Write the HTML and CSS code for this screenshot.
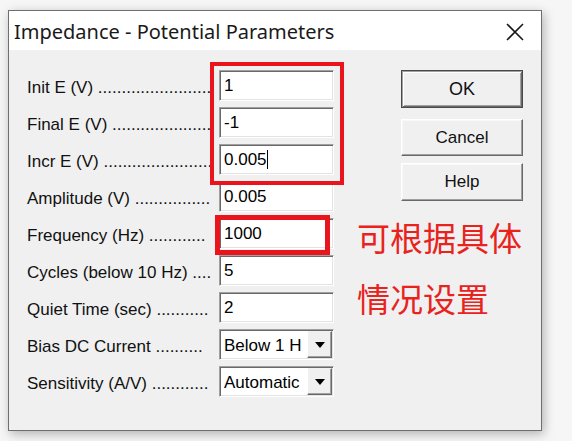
FILE: index.html
```html
<!DOCTYPE html>
<html lang="zh">
<head>
<meta charset="utf-8">
<title>Impedance - Potential Parameters</title>
<link rel="stylesheet" href="styles.css">
</head>
<body>
<div class="dialog">
  <div class="titlebar">
    <span class="title">Impedance - Potential Parameters</span>
    <svg class="close" width="18" height="18" viewBox="0 0 18 18"><path d="M1 1 L17 17 M17 1 L1 17" stroke="#1a1a1a" stroke-width="1.6" fill="none"/></svg>
  </div>
  <div class="body">
    <div class="form">
      <div class="row"><div class="label">Init E (V) ........................</div><div class="field">1</div></div>
      <div class="row"><div class="label">Final E (V) .....................</div><div class="field">-1</div></div>
      <div class="row"><div class="label">Incr E (V) .......................</div><div class="field">0.005<span class="caret"></span></div></div>
      <div class="row"><div class="label">Amplitude (V) ................</div><div class="field">0.005</div></div>
      <div class="row"><div class="label">Frequency (Hz) ............</div><div class="field">1000</div></div>
      <div class="row"><div class="label">Cycles (below 10 Hz) ....</div><div class="field">5</div></div>
      <div class="row"><div class="label">Quiet Time (sec) ...........</div><div class="field">2</div></div>
      <div class="row"><div class="label">Bias DC Current ..........</div><div class="combo"><span class="cv">Below 1 H</span><span class="drop"><span class="tri"></span></span></div></div>
      <div class="row"><div class="label">Sensitivity (A/V) ............</div><div class="combo"><span class="cv">Automatic</span><span class="drop"><span class="tri"></span></span></div></div>
    </div>
    <div class="buttons">
      <div class="btn default">OK</div>
      <div class="btn cancel">Cancel</div>
      <div class="btn help">Help</div>
    </div>
    <div class="mark mark1"></div>
    <div class="mark mark2"></div>
    <div class="note">可根据具体<br>情况设置</div>
  </div>
</div>
</body>
</html>
```
FILE: styles.css
```css
html, body {
  margin: 0;
  padding: 0;
}
body {
  width: 572px;
  height: 441px;
  background: #f6f6f6;
  overflow: hidden;
  font-family: "Liberation Sans", Arial, sans-serif;
}
.dialog {
  box-sizing: border-box;
  margin: 10px 0 0 8px;
  width: 534px;
  height: 421px;
  border: 1px solid #6f6f6f;
  box-shadow: 2px 3px 10px rgba(0,0,0,0.28);
  display: flex;
  flex-direction: column;
}
.titlebar {
  height: 39px;
  background: #ffffff;
  display: flex;
  align-items: center;
  justify-content: space-between;
  padding: 0 17px 0 5px;
}
.title {
  font-family: "Noto Sans", "Open Sans", sans-serif;
  font-size: 20px;
  color: #1a1a1a;
  margin-top: 1px;
}
.close {
  display: block;
  margin-top: 3px;
}
.body {
  position: relative;
  flex: 1;
  background: #f0f0f0;
  display: flex;
  align-items: flex-start;
  padding: 20px 0 0 18px;
}
.form {
  display: flex;
  flex-direction: column;
  gap: 6px;
}
.row {
  display: flex;
  align-items: center;
  height: 31px;
}
.label {
  width: 186px;
  font-size: 17px;
  color: #111;
  white-space: nowrap;
  margin-top: 4px;
  margin-right: 6px;
}
.field, .combo {
  box-sizing: border-box;
  width: 115px;
  height: 31px;
  background: #ffffff;
  border: 1px solid;
  border-color: #a0a0a0 #ffffff #ffffff #a0a0a0;
  box-shadow: inset 1px 1px 0 #696969, inset -1px -1px 0 #e3e3e3;
  font-size: 17px;
  color: #000;
  padding: 5px 0 0 4px;
  white-space: nowrap;
}
.caret {
  display: inline-block;
  width: 1px;
  height: 19px;
  background: #000;
  vertical-align: -4px;
}
.combo {
  display: flex;
  padding: 0 0 0 4px;
  align-items: center;
  justify-content: space-between;
}
.cv {
  padding-top: 3px;
}
.drop {
  box-sizing: border-box;
  flex: none;
  width: 25px;
  height: 27px;
  margin: 0 1px 0 0;
  background: #f0f0f0;
  border: 1px solid;
  border-color: #f0f0f0 #696969 #696969 #ffffff;
  box-shadow: inset -1px -1px 0 #a0a0a0;
  display: flex;
  align-items: center;
  justify-content: center;
}
.tri {
  width: 0;
  height: 0;
  border-left: 5px solid transparent;
  border-right: 5px solid transparent;
  border-top: 6px solid #000;
}
.buttons {
  display: flex;
  flex-direction: column;
  margin-left: 67px;
}
.btn {
  box-sizing: border-box;
  width: 122px;
  height: 37px;
  display: flex;
  align-items: center;
  justify-content: center;
  font-size: 17px;
  color: #111;
  background: #f0f0f0;
  border: 1px solid;
  border-color: #ffffff #696969 #696969 #ffffff;
  box-shadow: inset -1px -1px 0 #a0a0a0, inset 1px 1px 0 #f8f8f8;
}
.btn.default {
  height: 38px;
  border: 1px solid #4a4a4a;
  box-shadow: inset 1px 1px 0 #a0a0a0, inset -1px -1px 0 #696969, inset 2px 2px 0 #ffffff, inset -2px -2px 0 #a0a0a0;
  font-size: 18px;
}
.btn.cancel {
  margin-top: 11px;
}
.btn.help {
  margin-top: 7px;
  height: 38px;
}
.mark {
  position: absolute;
  box-sizing: border-box;
  border: 4px solid #e9141c;
}
.mark1 {
  left: 201px;
  top: 12px;
  width: 134px;
  height: 123px;
}
.mark2 {
  left: 206px;
  top: 165px;
  width: 115px;
  height: 40px;
  border-width: 5px;
}
.note {
  position: absolute;
  left: 348px;
  top: 157px;
  font-family: "Noto Sans CJK SC", sans-serif;
  font-size: 33px;
  line-height: 61px;
  color: #e8231e;
  white-space: nowrap;
}
```
